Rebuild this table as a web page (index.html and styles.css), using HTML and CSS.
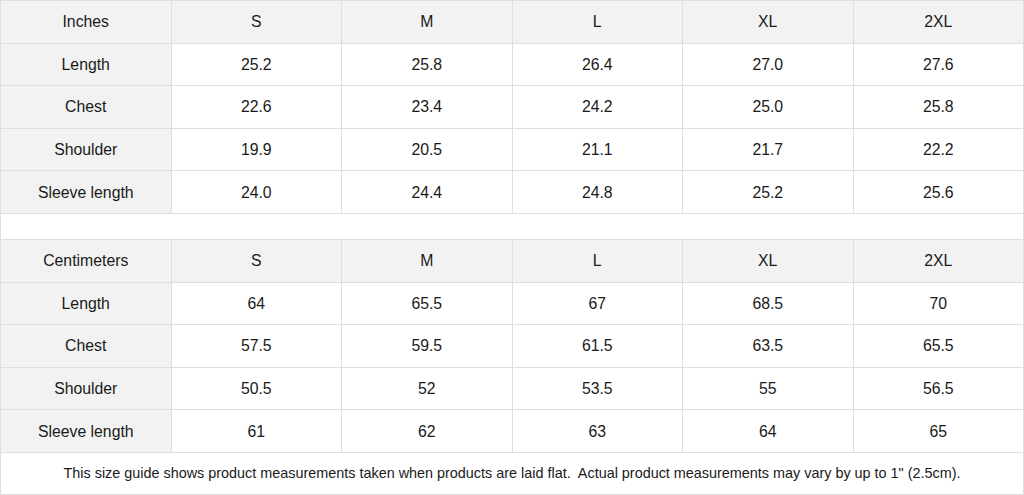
FILE: index.html
```html
<!DOCTYPE html>
<html>
<head>
<meta charset="utf-8">
<link rel="stylesheet" href="styles.css">
</head>
<body>
<table class="size-table">
  <colgroup>
    <col><col><col><col><col><col>
  </colgroup>
  <tbody>
    <tr class="head"><td class="label">Inches</td><td>S</td><td>M</td><td>L</td><td>XL</td><td>2XL</td></tr>
    <tr><td class="label">Length</td><td>25.2</td><td>25.8</td><td>26.4</td><td>27.0</td><td>27.6</td></tr>
    <tr><td class="label">Chest</td><td>22.6</td><td>23.4</td><td>24.2</td><td>25.0</td><td>25.8</td></tr>
    <tr><td class="label">Shoulder</td><td>19.9</td><td>20.5</td><td>21.1</td><td>21.7</td><td>22.2</td></tr>
    <tr><td class="label">Sleeve length</td><td>24.0</td><td>24.4</td><td>24.8</td><td>25.2</td><td>25.6</td></tr>
    <tr class="gap"><td colspan="6"></td></tr>
    <tr class="head"><td class="label">Centimeters</td><td>S</td><td>M</td><td>L</td><td>XL</td><td>2XL</td></tr>
    <tr><td class="label">Length</td><td>64</td><td>65.5</td><td>67</td><td>68.5</td><td>70</td></tr>
    <tr><td class="label">Chest</td><td>57.5</td><td>59.5</td><td>61.5</td><td>63.5</td><td>65.5</td></tr>
    <tr><td class="label">Shoulder</td><td>50.5</td><td>52</td><td>53.5</td><td>55</td><td>56.5</td></tr>
    <tr><td class="label">Sleeve length</td><td>61</td><td>62</td><td>63</td><td>64</td><td>65</td></tr>
    <tr class="note"><td colspan="6">This size guide shows product measurements taken when products are laid flat.&nbsp; Actual product measurements may vary by up to 1" (2.5cm).</td></tr>
  </tbody>
</table>
</body>
</html>
```
FILE: styles.css
```css
html, body {
  margin: 0;
  padding: 0;
  background: #ffffff;
}
.size-table {
  width: 1024px;
  table-layout: fixed;
  border-collapse: collapse;
  font-family: "Liberation Sans", Arial, sans-serif;
  font-size: 15.8px;
  color: #1a1a1a;
}
.size-table td {
  border: 1px solid #dedede;
  text-align: center;
  vertical-align: middle;
  padding: 1px 0 0 0;
  height: 40.6px;
}
.size-table .head td {
  background: #f2f2f2;
}
.size-table td.label {
  background: #f2f2f2;
}
.size-table .gap td {
  height: 25px;
  padding: 0;
  background: #ffffff;
}
.size-table .note td {
  height: 41px;
  padding: 0;
  font-size: 14.4px;
  background: #ffffff;
}
```
